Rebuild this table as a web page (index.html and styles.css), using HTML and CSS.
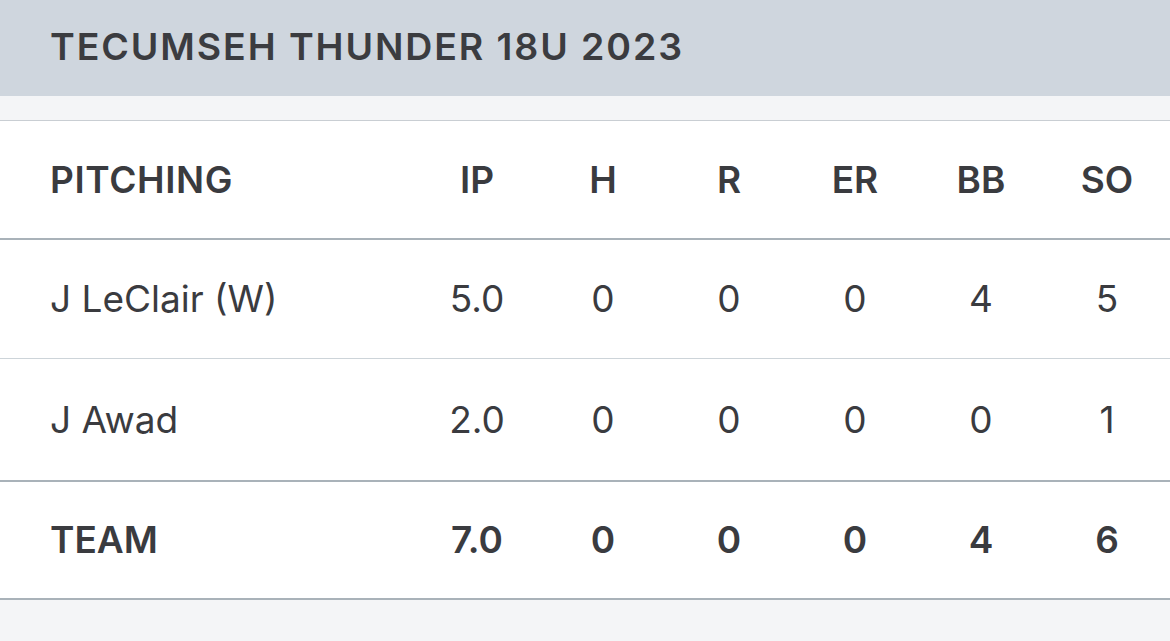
FILE: index.html
```html
<!DOCTYPE html>
<html>
<head>
<meta charset="utf-8">
<link rel="stylesheet" href="styles.css">
</head>
<body>
<div class="page">
  <header class="title-bar">
    <h1 class="title">TECUMSEH THUNDER 18U 2023</h1>
  </header>
  <div class="spacer"></div>
  <table class="stats">
    <colgroup>
      <col class="col-name">
      <col class="col-num"><col class="col-num"><col class="col-num">
      <col class="col-num"><col class="col-num"><col class="col-num">
    </colgroup>
    <thead>
      <tr class="head-row">
        <th class="name">PITCHING</th>
        <th>IP</th><th>H</th><th>R</th><th>ER</th><th>BB</th><th>SO</th>
      </tr>
    </thead>
    <tbody>
      <tr class="row">
        <td class="name">J LeClair (W)</td>
        <td>5.0</td><td>0</td><td>0</td><td>0</td><td>4</td><td>5</td>
      </tr>
      <tr class="row last">
        <td class="name">J Awad</td>
        <td>2.0</td><td>0</td><td>0</td><td>0</td><td>0</td><td>1</td>
      </tr>
    </tbody>
    <tfoot>
      <tr class="total-row">
        <td class="name">TEAM</td>
        <td>7.0</td><td>0</td><td>0</td><td>0</td><td>4</td><td>6</td>
      </tr>
    </tfoot>
  </table>
</div>
</body>
</html>
```

FILE: styles.css
```css
html, body {
  margin: 0;
  padding: 0;
  background: #f4f5f7;
}
body {
  font-family: Inter, "Noto Sans", sans-serif;
  color: #3a3b3f;
}
.page {
  width: 1170px;
}
.title-bar {
  height: 96px;
  background: #cfd6de;
  display: flex;
  align-items: center;
  padding-left: 50px;
  padding-bottom: 3px;
  box-sizing: border-box;
}
.title {
  margin: 0;
  font-size: 37.5px;
  font-weight: 600;
  letter-spacing: 1.9px;
  color: #3b3c40;
}
.spacer {
  height: 24px;
}
.stats {
  width: 1170px;
  border-collapse: collapse;
  table-layout: fixed;
  background: #ffffff;
  border-top: 1px solid #c9ced3;
}
.col-name { width: 414px; }
.col-num { width: 126px; }
.stats th, .stats td {
  text-align: center;
  padding: 0;
  font-size: 37px;
  color: #3a3b3f;
}
.stats .name {
  text-align: left;
  padding-left: 50px;
}
.stats th {
  font-weight: 600;
}
.stats th.name {
  letter-spacing: 0.6px;
}
.head-row {
  height: 118px;
  border-bottom: 2px solid #a9b2b9;
}
.row {
  height: 120px;
  border-bottom: 1px solid #cdd4d9;
}
.row td {
  font-weight: 400;
}
.row.last {
  height: 122px;
  border-bottom: 2px solid #a9b2b9;
}
.total-row {
  height: 118px;
  border-bottom: 2px solid #a9b2b9;
}
.total-row td {
  font-weight: 600;
}
```
